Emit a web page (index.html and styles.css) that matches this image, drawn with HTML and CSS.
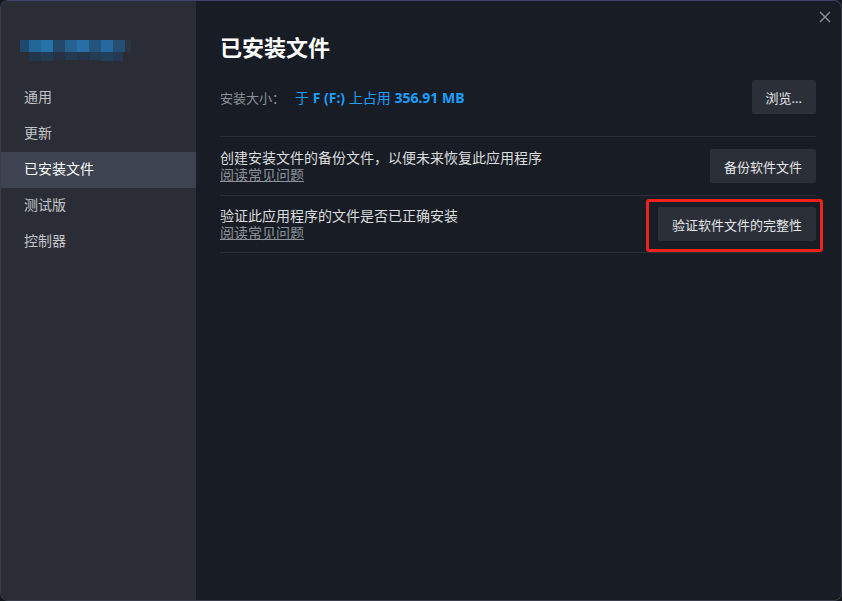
FILE: index.html
```html
<!DOCTYPE html>
<html lang="zh-CN">
<head>
<meta charset="utf-8">
<title>已安装文件</title>
<link rel="stylesheet" href="styles.css">
</head>
<body>
<div class="window">
  <aside class="sidebar">
    <div class="logo">
      <svg width="112" height="22" viewBox="0 0 112 22">
        <g>
          <rect x="0" y="0" width="10" height="12" fill="#21496b"/>
          <rect x="9" y="0" width="12" height="12" fill="#236799"/>
          <rect x="21" y="0" width="12" height="12" fill="#2673ab"/>
          <rect x="33" y="0" width="12" height="12" fill="#24486a"/>
          <rect x="45" y="0" width="12" height="12" fill="#25628f"/>
          <rect x="57" y="0" width="12" height="12" fill="#276fa6"/>
          <rect x="69" y="0" width="12" height="12" fill="#24547c"/>
          <rect x="81" y="0" width="12" height="12" fill="#2668a0"/>
          <rect x="93" y="0" width="12" height="12" fill="#244f73"/>
          <rect x="105" y="0" width="6" height="12" fill="#2b3442"/>
          <rect x="9" y="12" width="12" height="9" fill="#23364b"/>
          <rect x="21" y="12" width="12" height="9" fill="#233b53"/>
          <rect x="33" y="12" width="12" height="8" fill="#283244"/>
          <rect x="45" y="12" width="12" height="8" fill="#243a50"/>
          <rect x="57" y="12" width="12" height="8" fill="#26344a"/>
          <rect x="69" y="12" width="12" height="8" fill="#243d55"/>
          <rect x="81" y="12" width="12" height="9" fill="#23405a"/>
          <rect x="93" y="12" width="10" height="9" fill="#253a52"/>
        </g>
      </svg>
    </div>
    <nav class="nav">
      <div class="nav-item">通用</div>
      <div class="nav-item">更新</div>
      <div class="nav-item active">已安装文件</div>
      <div class="nav-item">测试版</div>
      <div class="nav-item">控制器</div>
    </nav>
  </aside>
  <main class="main">
    <button class="close" aria-label="关闭">
      <svg width="12" height="12" viewBox="0 0 12 12"><path d="M1 1L11 11M11 1L1 11" stroke="#8b929a" stroke-width="1.4" fill="none"/></svg>
    </button>
    <h1 class="title">已安装文件</h1>
    <div class="size-row">
      <div class="size-text"><span class="size-label">安装大小：</span><span class="size-value">于 <b>F (F:)</b> 上占用 <b>356.91 MB</b></span></div>
      <button class="btn">浏览...</button>
    </div>
    <div class="rows">
      <div class="row first">
        <div class="row-text">
          <div class="row-desc">创建安装文件的备份文件，以便未来恢复此应用程序</div>
          <a class="row-link">阅读常见问题</a>
        </div>
        <button class="btn">备份软件文件</button>
      </div>
      <div class="row last">
        <div class="row-text">
          <div class="row-desc">验证此应用程序的文件是否已正确安装</div>
          <a class="row-link">阅读常见问题</a>
        </div>
        <div class="highlight">
          <button class="btn">验证软件文件的完整性</button>
        </div>
      </div>
    </div>
  </main>
</div>
</body>
</html>
```

FILE: styles.css
```css
* { box-sizing: border-box; }
html, body {
  margin: 0;
  padding: 0;
  width: 842px;
  height: 601px;
  overflow: hidden;
  background: #15171c;
  font-family: "Noto Sans", "Noto Sans CJK SC", sans-serif;
}
.window {
  width: 842px;
  height: 601px;
  display: flex;
  border: 1px solid #3a3e4c;
  border-top-color: #3e4266;
  border-radius: 8px;
  overflow: hidden;
  background: #181c24;
}
.sidebar {
  width: 195px;
  flex: none;
  background: #2a2d36;
  padding-top: 39px;
}
.logo {
  height: 40px;
  padding-left: 19px;
  filter: blur(0.6px);
}
.logo svg { display: block; }
.nav { display: flex; flex-direction: column; }
.nav-item {
  height: 36px;
  line-height: 34px;
  padding-left: 23px;
  font-size: 14px;
  color: #c3c5c9;
}
.nav-item.active {
  background: #3d4350;
  color: #ffffff;
}
.main {
  flex: 1;
  position: relative;
  padding: 31px 25px 0 24px;
}
.close {
  position: absolute;
  top: 9px;
  right: 9px;
  width: 14px;
  height: 14px;
  padding: 1px;
  border: 0;
  background: none;
  display: flex;
}
.title {
  margin: 0;
  font-size: 22px;
  line-height: 30px;
  font-weight: 700;
  color: #ffffff;
}
.size-row {
  margin-top: 18px;
  display: flex;
  align-items: center;
  justify-content: space-between;
  padding-bottom: 22px;
}
.size-text { font-size: 13px; display: flex; align-items: baseline; }
.size-label { color: #8b929a; margin-right: 10px; }
.size-value { color: #1a9fff; font-weight: 400; font-size: 14px; white-space: pre; }
.size-value b { font-weight: 700; }
.btn {
  height: 34px;
  padding: 0 14px;
  border: 0;
  border-radius: 2px;
  background: #2b2f38;
  color: #e4e6e8;
  font-family: inherit;
  font-size: 13px;
  white-space: nowrap;
}
.rows { display: flex; flex-direction: column; }
.row {
  display: flex;
  align-items: center;
  justify-content: space-between;
  border-top: 1px solid #2a2f38;
}
.row.first { padding: 12px 0 12px; }
.row.last { padding: 11px 0 11px; border-bottom: 1px solid #2a2f38; }
.row-text { display: flex; flex-direction: column; font-size: 14px; line-height: 17px; }
.row-desc { color: #dcdedf; }
.row-link { color: #8b929a; text-decoration: underline; }
.highlight { position: relative; display: flex; }
.highlight::after {
  content: "";
  position: absolute;
  top: -8px;
  left: -12px;
  right: -7px;
  bottom: -11px;
  border: 3px solid #f0201a;
  border-radius: 3px;
}
```
